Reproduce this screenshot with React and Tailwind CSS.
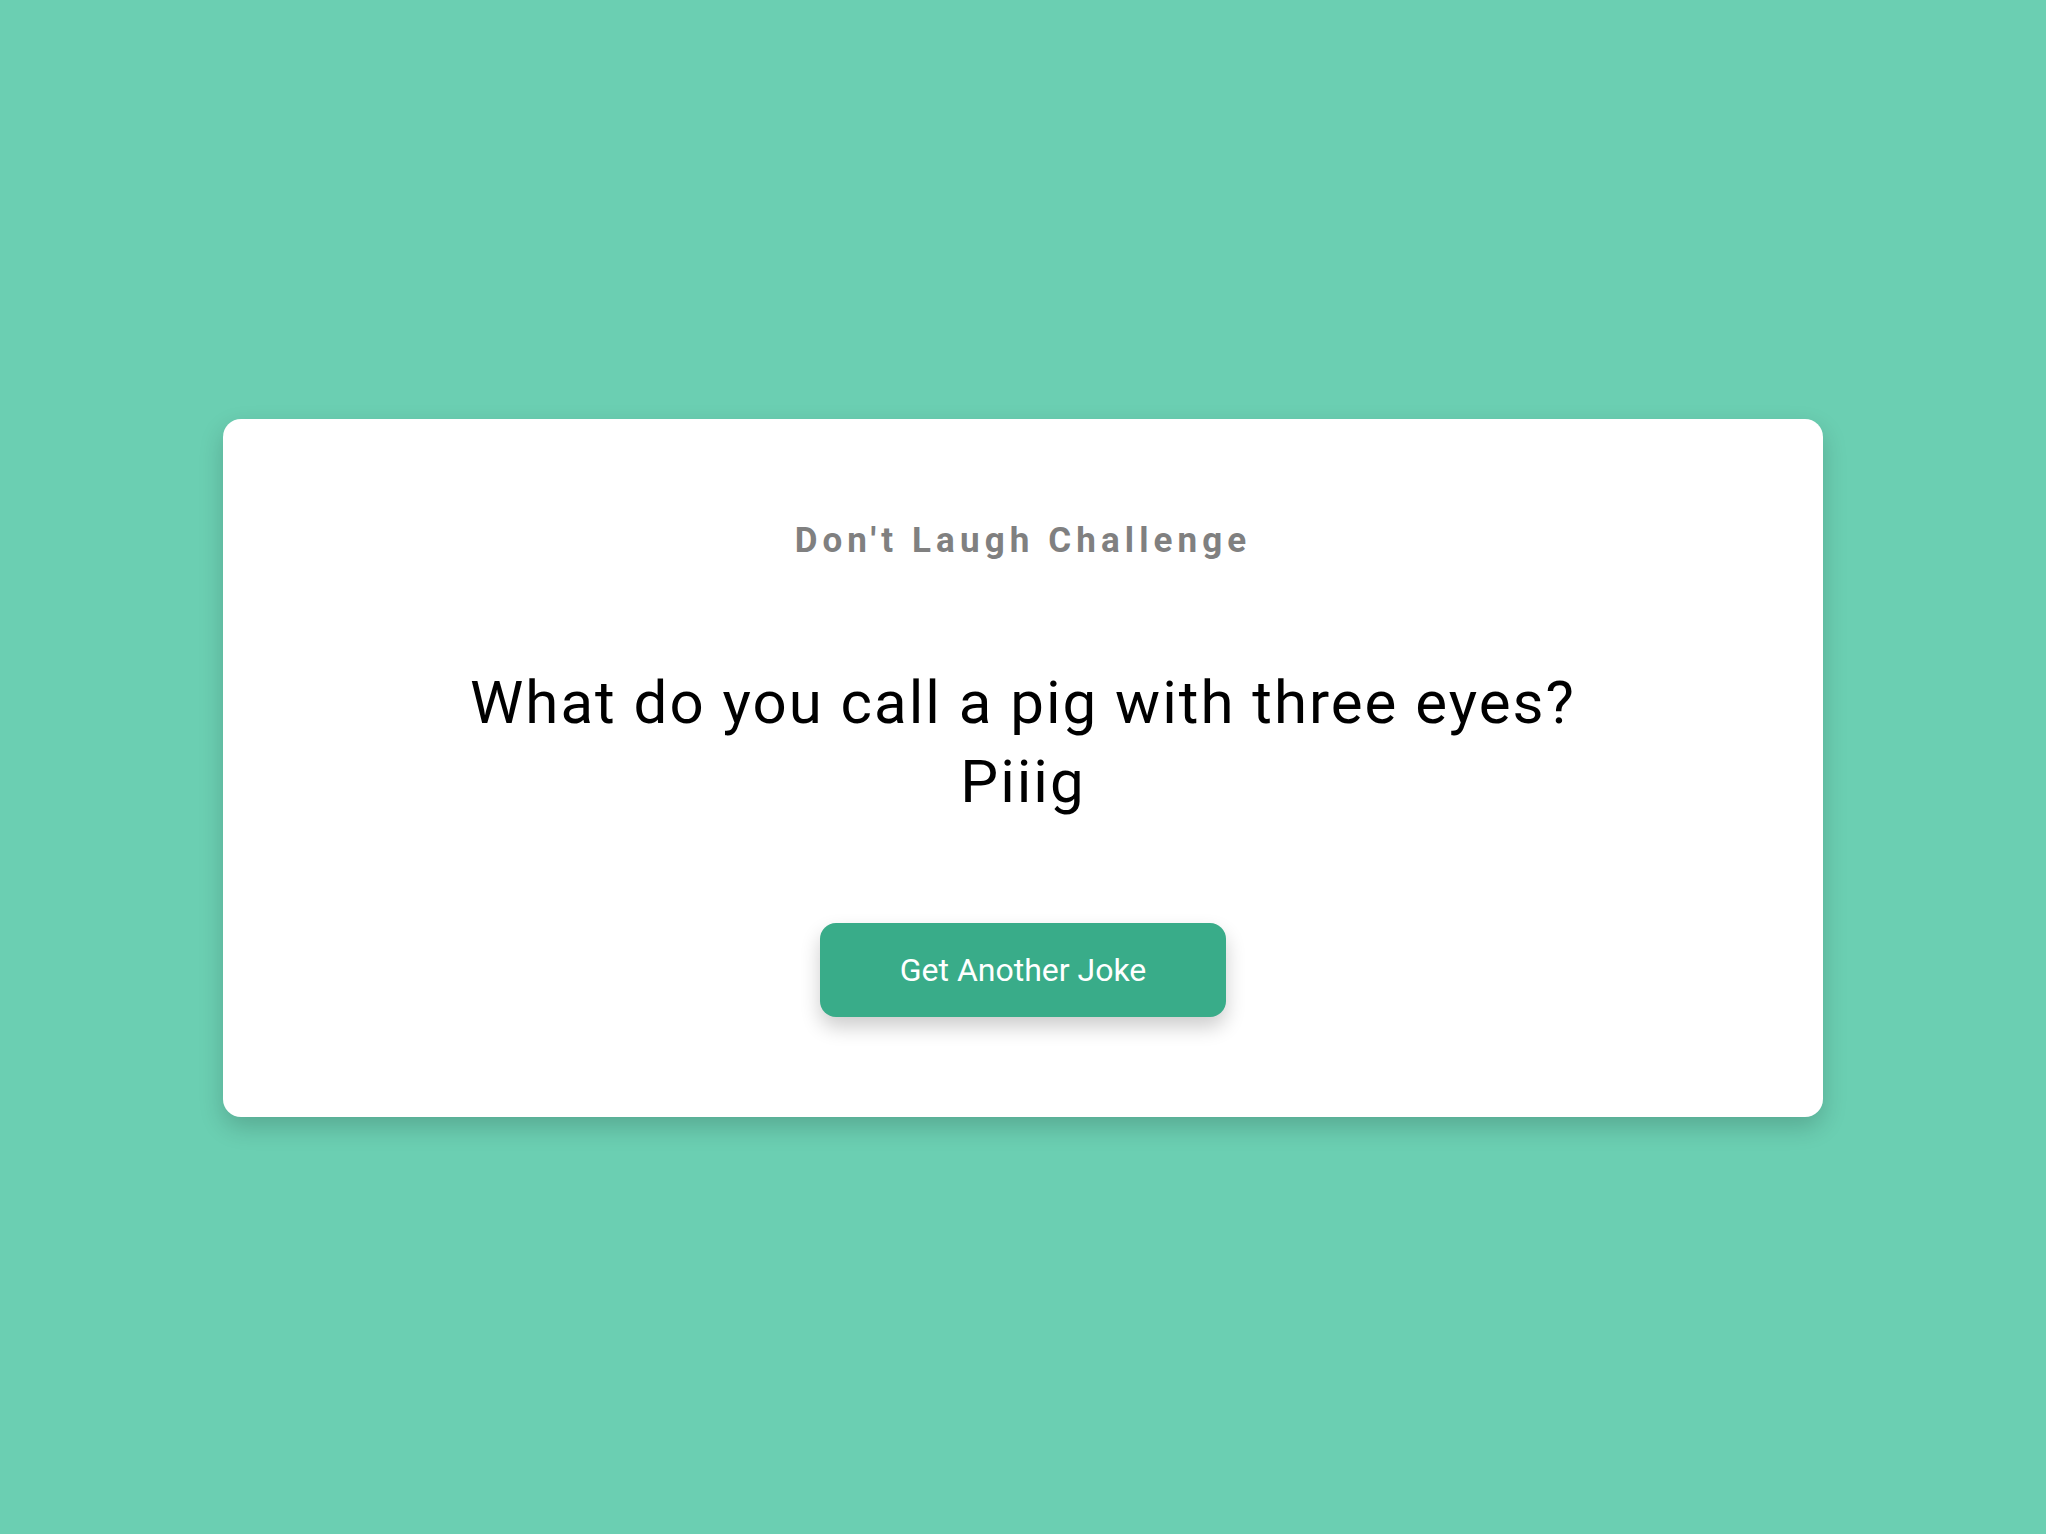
import React from 'react';

const App = () => {
  return (
    <div className="min-h-screen w-full bg-[#6bcfb2] flex items-center justify-center font-['Roboto',sans-serif]">
      {/* Card */}
      <div className="w-[1600px] bg-white rounded-[18px] shadow-[0_10px_24px_rgba(0,0,0,0.18)] flex flex-col items-center pt-[102px] pb-[100px] gap-[102px] translate-y-px">
        <h1 className="text-[35px] leading-[40px] font-bold tracking-[5.1px] text-[#808080]">
          Don't Laugh Challenge
        </h1>

        <p className="text-[60px] leading-[79px] tracking-[2px] text-black text-center">
          What do you call a pig with three eyes?
          <br />
          Piiig
        </p>

        <button className="w-[406px] h-[94px] rounded-[16px] bg-[#39ac89] text-white text-[32px] shadow-[0_10px_20px_rgba(0,0,0,0.2)]">
          Get Another Joke
        </button>
      </div>
    </div>
  );
};

export default App;
